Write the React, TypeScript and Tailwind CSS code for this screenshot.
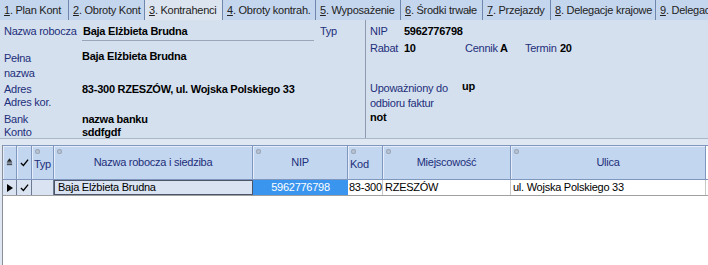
import clsx from 'clsx'
import type { ReactNode } from 'react'

const tabs = [
  { n: '1', label: '. Plan Kont', w: 'w-[69px]' },
  { n: '2', label: '. Obroty Kont', w: 'w-[76px]' },
  { n: '3', label: '. Kontrahenci', w: 'w-[78px]', active: true },
  { n: '4', label: '. Obroty kontrah.', w: 'w-[93px]' },
  { n: '5', label: '. Wyposażenie', w: 'w-[85px]' },
  { n: '6', label: '. Środki trwałe', w: 'w-[82px]' },
  { n: '7', label: '. Przejazdy', w: 'w-[68px]' },
  { n: '8', label: '. Delegacje krajowe', w: 'w-[105px]' },
  { n: '9', label: '. Delegacje zagraniczne', w: 'w-[120px]' },
]

function Label({ children, className }: { children: ReactNode; className?: string }) {
  return <span className={clsx('text-[#1d2f7a]', className)}>{children}</span>
}

function Value({ children, className }: { children: ReactNode; className?: string }) {
  return <span className={clsx('font-bold text-black', className)}>{children}</span>
}

function HeadCell({ w, children, dot = true, center = true }: { w: string; children?: ReactNode; dot?: boolean; center?: boolean }) {
  return (
    <div
      className={clsx(
        w,
        'relative flex h-full shrink-0 items-center border-r border-[#7f97bf] bg-[#c3d6ef] text-[#1d2f7a] shadow-[inset_1px_1px_0_#e4edf9]',
        center ? 'justify-center' : 'justify-start pl-[2px]'
      )}
    >
      {dot ? <span className="absolute left-[3px] top-[3px] h-[5px] w-[5px] rounded-full bg-[#b9c4d4] shadow-[inset_0_0_0_1px_#9aa6b8]" /> : null}
      {children}
    </div>
  )
}

function CheckIcon() {
  return (
    <svg viewBox="0 0 10 10" className="h-[9px] w-[9px]" aria-hidden="true">
      <path d="M1 5.5 L3.8 8.2 L9 1.8" fill="none" stroke="#000" strokeWidth="1.5" />
    </svg>
  )
}

export default function App() {
  return (
    <div className="flex h-[265px] w-[708px] flex-col overflow-hidden bg-white font-['Liberation_Sans',Arial,sans-serif] text-[11px] leading-[13px] tracking-[-0.25px]">
      {/* tabs */}
      <div className="flex h-[20px] shrink-0 items-stretch overflow-hidden bg-[#c4d6ee]">
        {tabs.map((t) => (
          <div
            key={t.n}
            className={clsx(
              t.w,
              'flex shrink-0 items-center whitespace-nowrap border-r border-[#6f86ad] pl-[4px] text-[#222]',
              t.active ? 'bg-[#dce4ef]' : 'bg-[#c4d6ee]'
            )}
          >
            <span className="underline underline-offset-1">{t.n}</span>
            {t.label}
          </div>
        ))}
      </div>

      {/* info panel */}
      <div className="flex h-[119px] shrink-0 border-b border-[#aab7c9] bg-[#d5e0ef]">
        <div className="relative w-[366px] shrink-0 border-r border-[#8d9ab0] pl-[4px]">
          <div className="flex h-[18px] items-end">
            <Label className="w-[78px] shrink-0">Nazwa robocza</Label>
            <Value className="w-[232px] shrink-0 border-b border-[#9aa5b7] pb-[2px] pl-[1px] -mb-[3px]">Baja Elżbieta Brudna</Value>
            <Label className="ml-[6px]">Typ</Label>
          </div>
          <div className="mt-[12px] flex">
            <div className="flex w-[78px] shrink-0 flex-col">
              <Label className="mt-[2px]">Pełna</Label>
              <Label className="mt-[2px]">nazwa</Label>
            </div>
            <Value>Baja Elżbieta Brudna</Value>
          </div>
          <div className="mt-[3px] flex">
            <Label className="w-[78px] shrink-0">Adres</Label>
            <Value>83-300 RZESZÓW, ul. Wojska Polskiego 33</Value>
          </div>
          <div className="flex">
            <Label className="w-[78px] shrink-0">Adres kor.</Label>
          </div>
          <div className="mt-[4px] flex">
            <Label className="w-[78px] shrink-0">Bank</Label>
            <Value>nazwa banku</Value>
          </div>
          <div className="flex">
            <Label className="w-[78px] shrink-0">Konto</Label>
            <Value>sddfgdf</Value>
          </div>
        </div>
        <div className="flex-1 pl-[4px]">
          <div className="flex h-[18px] items-end">
            <Label className="w-[34px] shrink-0">NIP</Label>
            <Value>5962776798</Value>
          </div>
          <div className="mt-[4px] flex">
            <Label className="w-[34px] shrink-0">Rabat</Label>
            <Value className="w-[61px] shrink-0">10</Value>
            <Label className="w-[35px] shrink-0">Cennik</Label>
            <Value className="w-[25px] shrink-0">A</Value>
            <Label className="w-[35px] shrink-0">Termin</Label>
            <Value>20</Value>
          </div>
          <div className="mt-[27px] flex items-start">
            <div className="flex w-[92px] shrink-0 flex-col">
              <Label>Upoważniony do</Label>
              <Label className="mt-[2px]">odbioru faktur</Label>
            </div>
            <Value className="-mt-[2px]">up</Value>
          </div>
          <div className="mt-[1px]">
            <Value>not</Value>
          </div>
        </div>
      </div>

      {/* grid */}
      <div className="flex min-h-0 flex-1 flex-col bg-[#dfe7f2] pt-[6px]">
        <div className="ml-[2px] flex min-h-0 flex-1 flex-col border-l border-[#8a8f99] bg-white">
          <div className="flex h-[35px] shrink-0 border-y border-[#7f97bf]">
            <HeadCell w="w-[14px]" dot={false}>
              <svg viewBox="0 0 8 10" className="h-[9px] w-[7px]" aria-hidden="true">
                <path d="M4 0 L7 4 L1 4 Z" fill="#222" />
                <rect x="1" y="5" width="6" height="1" fill="#222" />
                <rect x="1" y="7" width="6" height="1" fill="#222" />
              </svg>
            </HeadCell>
            <HeadCell w="w-[15px]" dot={false}>
              <CheckIcon />
            </HeadCell>
            <HeadCell w="w-[22px]" center={false}>
              <span className="mt-[3px]">Typ</span>
            </HeadCell>
            <HeadCell w="w-[199px]">Nazwa robocza i siedziba</HeadCell>
            <HeadCell w="w-[95px]">NIP</HeadCell>
            <HeadCell w="w-[35px]" center={false}>
              <span className="mt-[3px]">Kod</span>
            </HeadCell>
            <HeadCell w="w-[128px]">Miejscowość</HeadCell>
            <HeadCell w="w-[195px]">Ulica</HeadCell>
          </div>
          <div className="flex h-[16px] shrink-0 border-b border-[#a0a0a0]">
            <div className="flex w-[14px] shrink-0 items-center justify-center border-r border-[#6b7a90] bg-[#d9e3f1]">
              <svg viewBox="0 0 6 8" className="h-[8px] w-[6px]" aria-hidden="true">
                <path d="M0 0 L6 4 L0 8 Z" fill="#000" />
              </svg>
            </div>
            <div className="flex w-[15px] shrink-0 items-center justify-center border-r border-[#6b7a90] bg-[#d9e3f1]">
              <CheckIcon />
            </div>
            <div className="w-[22px] shrink-0 border-r border-[#6b7a90] bg-[#d9e3f1]" />
            <div className="flex w-[199px] shrink-0 items-center border border-[#4c5668] bg-[#d9e3f1] pl-[3px] text-black">
              Baja Elżbieta Brudna
            </div>
            <div className="flex w-[95px] shrink-0 items-center justify-center bg-[#3a95ee] text-white">5962776798</div>
            <div className="flex w-[35px] shrink-0 items-center border-r border-[#c8c8c8] pl-[1px] text-black">83-300</div>
            <div className="flex w-[128px] shrink-0 items-center border-r border-[#c8c8c8] pl-[2px] text-black">RZESZÓW</div>
            <div className="flex w-[195px] shrink-0 items-center border-r border-[#c8c8c8] pl-[2px] text-black">ul. Wojska Polskiego 33</div>
          </div>
          <div className="flex-1 bg-white" />
        </div>
      </div>
    </div>
  )
}
